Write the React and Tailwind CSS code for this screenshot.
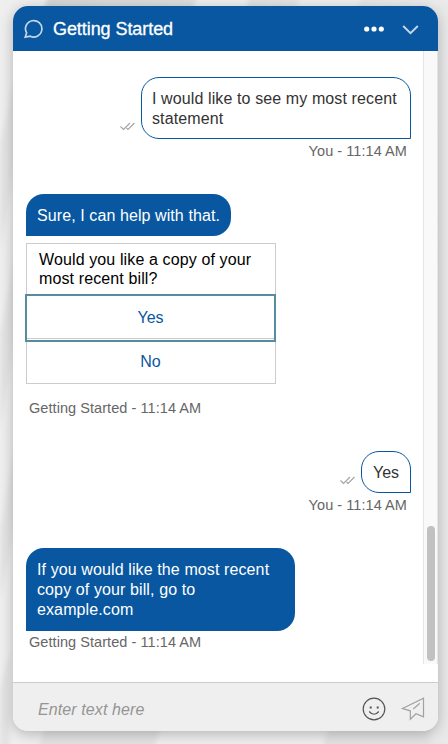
import React from "react";

const metaClass = "text-[14.5px] leading-[18px] tracking-[0.06px] text-[#666]";

function Ticks() {
  return (
    <svg className="mb-[8px] shrink-0" width="15" height="9" viewBox="0 0 15 9" fill="none" stroke="#a5a5a5" strokeWidth="1.2">
      <path d="M.5 4.5 3.5 7.5 10 1M6.5 6 8 7.5 14.5 1" />
    </svg>
  );
}

function Sent({ children, wide }) {
  return (
    <div className="flex items-end justify-end gap-[6px]">
      <Ticks />
      <div className={`rounded-[18px] rounded-br-none border border-[#0857a0] px-[10px] pt-[11px] pb-[9px] text-[16px] leading-5 text-[#333] ${wide ? "w-[270px] tracking-[0.11px]" : "w-[50px] pl-[11px]"}`}>
        {children}
      </div>
    </div>
  );
}

function Backdrop() {
  return (
    <svg className="absolute inset-0" width="448" height="744" aria-hidden="true">
      <defs>
        <linearGradient id="streak" x1="0" x2="1" y1="0" y2="0">
          <stop offset="0" stopColor="#d6d6d6" />
          <stop offset="1" stopColor="#ececec" />
        </linearGradient>
        <filter id="soft" x="-20%" y="-20%" width="140%" height="140%">
          <feGaussianBlur stdDeviation="2" />
        </filter>
      </defs>
      <rect width="448" height="744" fill="#efefef" />
      <g filter="url(#soft)">
        <path d="M48-4 42 14H190L198-4ZM250-4 244 14H293L301-4ZM362-4 355 14H436L441-4Z" fill="url(#streak)" />
        <path d="M0 145 18 60V150L0 250ZM0 335 18 240V320L0 430ZM0 530 18 430V510L0 600Z" fill="#e4e4e4" />
        <path d="M0 748V690L10 650V748ZM46 724 38 748H154L162 724ZM330 724 322 748H448V724Z" fill="#e3e3e3" />
        <path d="M438 0H452V744H430Z" fill="#e9e9e9" />
      </g>
    </svg>
  );
}

export default function App() {
  return (
    <div className="relative h-[744px] w-[448px] overflow-hidden bg-[#e6e6e6] font-['Liberation_Sans',Arial,sans-serif]">
      <Backdrop />
      <div className="relative ml-[13px] pt-[6px]">
        <div className="flex h-[725px] w-[425px] flex-col overflow-hidden rounded-[15px] bg-white shadow-[0_3px_14px_rgba(0,0,0,0.25)]">
          <header className="flex h-[45px] shrink-0 items-center bg-[#0857a0] pl-[11px] text-white">
            <svg width="20" height="20" viewBox="0 0 20 20" fill="none" stroke="#c3d6e9" strokeWidth="1.7">
              <path d="M1.2 18.2 2.6 13.9A8.2 8.2 0 1 1 6.2 17.2Z" />
            </svg>
            <h1 className="ml-[9px] grow pt-[2px] text-[18px] tracking-[-0.07px] [-webkit-text-stroke:0.3px_white]">Getting Started</h1>
            <svg width="20" height="6" viewBox="0 0 20 6" fill="white">
              <circle cx="2.7" cy="3" r="2.6" />
              <circle cx="10" cy="3" r="2.6" />
              <circle cx="17.3" cy="3" r="2.6" />
            </svg>
            <svg className="mt-[2px] mr-[19px] ml-[18px]" width="17" height="10" viewBox="0 0 17 10" fill="none" stroke="#c3d6e9" strokeWidth="2">
              <path d="M1.2 1 8.5 8.2 15.8 1" />
            </svg>
          </header>
          <div className="flex h-[613px] shrink-0">
            <main className="flex w-[410px] flex-col pt-[26px] pr-[12px] pl-[13px]">
              <Sent wide>I would like to see my most recent statement</Sent>
              <div className={`${metaClass} mt-[3px] mr-[4px] text-right`}>You - 11:14 AM</div>
              <div className="mt-[34px] h-[42px] w-[205px] rounded-[18px] rounded-bl-none bg-[#0857a0] px-[11px] pt-[12px] text-[16px] leading-5 tracking-[0.09px] whitespace-nowrap text-white">
                Sure, I can help with that.
              </div>
              <section className="mt-[7px] h-[141px] w-[250px] border border-[#ccc] text-[16px]">
                <p className="h-[50px] pt-[6px] pl-[12px] leading-[19px] tracking-[0.12px] text-black">
                  Would you like a copy of your
                  <br />
                  most recent bill?
                </p>
                <button className="-ml-[2px] block h-[48px] w-[251px] border-2 border-[#568c9f] text-[#0857a0]">
                  <span className="flex h-[42px] items-center justify-center pt-[2px]">Yes</span>
                  <span className="block h-px bg-[#ccc]" />
                  <span className="block h-px" />
                </button>
                <button className="flex h-[39px] w-full items-center justify-center pr-[1px] text-[#0857a0]">No</button>
              </section>
              <div className={`${metaClass} mt-[15px] ml-[3px]`}>Getting Started - 11:14 AM</div>
              <div className="mt-[34px]"><Sent>Yes</Sent></div>
              <div className={`${metaClass} mt-[3px] mr-[4px] text-right`}>You - 11:14 AM</div>
              <div className="mt-[34px] h-[83px] w-[269px] rounded-[18px] rounded-bl-none bg-[#0857a0] px-[11px] pt-[12px] text-[16px] leading-5 tracking-[0.11px] text-white">
                If you would like the most recent
                <br />
                copy of your bill, go to
                <br />
                example.com
              </div>
              <div className={`${metaClass} mt-[2px] ml-[3px]`}>Getting Started - 11:14 AM</div>
            </main>
            <aside className="w-[15px] border-x border-[#e5e5e5] bg-[#f9f9f9] pt-[475px] pl-[3px]">
              <div className="h-[135px] w-[8px] rounded-full bg-[#c1c1c1]" />
            </aside>
          </div>
          <footer className="mt-[18px] flex h-[49px] shrink-0 items-center border-t border-[#ccc] bg-[#efefef] pt-[3px] pl-[25px]">
            <span className="grow pt-[3px] text-[16px] tracking-[0.1px] text-[#959595] italic">Enter text here</span>
            <svg width="24" height="24" viewBox="0 0 24 24" fill="none" stroke="#555" strokeWidth="1.2">
              <circle cx="12" cy="12" r="10.8" />
              <path d="M7.2 14.5Q12 20 16.8 14.5" />
              <path d="M7.7 10.5h2M14.7 10.5h2" strokeWidth="2" />
            </svg>
            <svg className="mr-[13px] ml-[15px]" width="24" height="24" viewBox="0 0 24 24" fill="none" stroke="#a2a2a2" strokeWidth="1.2">
              <path d="M1.5 11.5 22.5 1.3V19.8L15 16.7 9.3 22.3V13.8ZM12.3 12 18.8 6.3" />
            </svg>
          </footer>
        </div>
      </div>
    </div>
  );
}
